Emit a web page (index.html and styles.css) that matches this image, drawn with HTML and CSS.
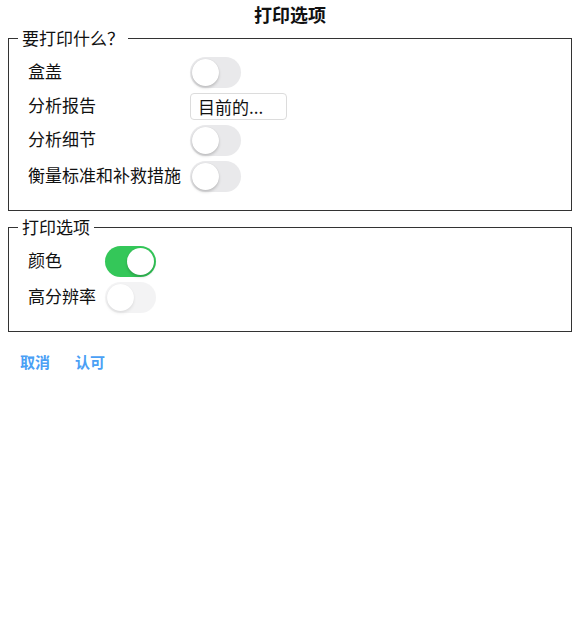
FILE: index.html
```html
<!DOCTYPE html>
<html lang="zh">
<head>
<meta charset="utf-8">
<link rel="stylesheet" href="styles.css">
</head>
<body>
<div class="page">
  <h1 class="title">打印选项</h1>
  <fieldset class="group">
    <legend class="legend">要打印什么？</legend>
    <div class="rows">
      <span class="label">盒盖</span><span class="switch"><span class="knob"></span></span>
      <span class="label">分析报告</span><span class="select">目前的...</span>
      <span class="label">分析细节</span><span class="switch"><span class="knob"></span></span>
      <span class="label">衡量标准和补救措施</span><span class="switch"><span class="knob"></span></span>
    </div>
  </fieldset>
  <fieldset class="group group-second">
    <legend class="legend">打印选项</legend>
    <div class="rows">
      <span class="label">颜色</span><span class="switch on"><span class="knob"></span></span>
      <span class="label">高分辨率</span><span class="switch disabled"><span class="knob"></span></span>
    </div>
  </fieldset>
  <div class="actions">
    <span class="action">取消</span>
    <span class="action">认可</span>
  </div>
</div>
</body>
</html>
```

FILE: styles.css
```css
html, body {
  margin: 0;
  padding: 0;
  background: #fff;
}
body {
  font-family: "Noto Sans CJK SC", "Noto Sans", sans-serif;
  color: #111;
  font-size: 17px;
}
.page {
  padding: 3px 8px 0;
}
.title {
  margin: 0;
  font-size: 18px;
  font-weight: 700;
  line-height: 23px;
  text-align: center;
  color: #111;
}
.group {
  margin: 0;
  border: 1px solid #333;
  padding: 7px 18px 18px 9px;
}
.group-second {
  margin-top: 4px;
}
.legend {
  padding: 0 4px;
  font-size: 17px;
  line-height: 24px;
}
.rows {
  display: grid;
  grid-template-columns: max-content max-content;
  column-gap: 9px;
  row-gap: 5px;
  align-items: center;
  padding-left: 10px;
}
.label {
  line-height: 22px;
  padding-bottom: 4px;
  white-space: nowrap;
}
.switch {
  position: relative;
  display: block;
  width: 51px;
  height: 31px;
  border-radius: 16px;
  background: #e9e9eb;
}
.knob {
  position: absolute;
  top: 2px;
  left: 2px;
  width: 27px;
  height: 27px;
  border-radius: 50%;
  background: #fff;
  box-shadow: 0 2px 3px rgba(0,0,0,0.18), 0 0 1px rgba(0,0,0,0.12);
}
.switch.on {
  background: #34c759;
}
.switch.on .knob {
  left: 22px;
}
.switch.disabled {
  opacity: 0.5;
}
.select {
  display: block;
  width: 97px;
  height: 27px;
  box-sizing: border-box;
  border: 1px solid #dcdcdc;
  border-radius: 4px;
  padding: 0 7px;
  line-height: 25px;
  background: #fff;
  white-space: nowrap;
}
.actions {
  display: flex;
  gap: 25px;
  padding: 18px 12px;
}
.action {
  font-size: 15px;
  font-weight: 700;
  color: #4aa0f5;
  line-height: 24px;
}
```
